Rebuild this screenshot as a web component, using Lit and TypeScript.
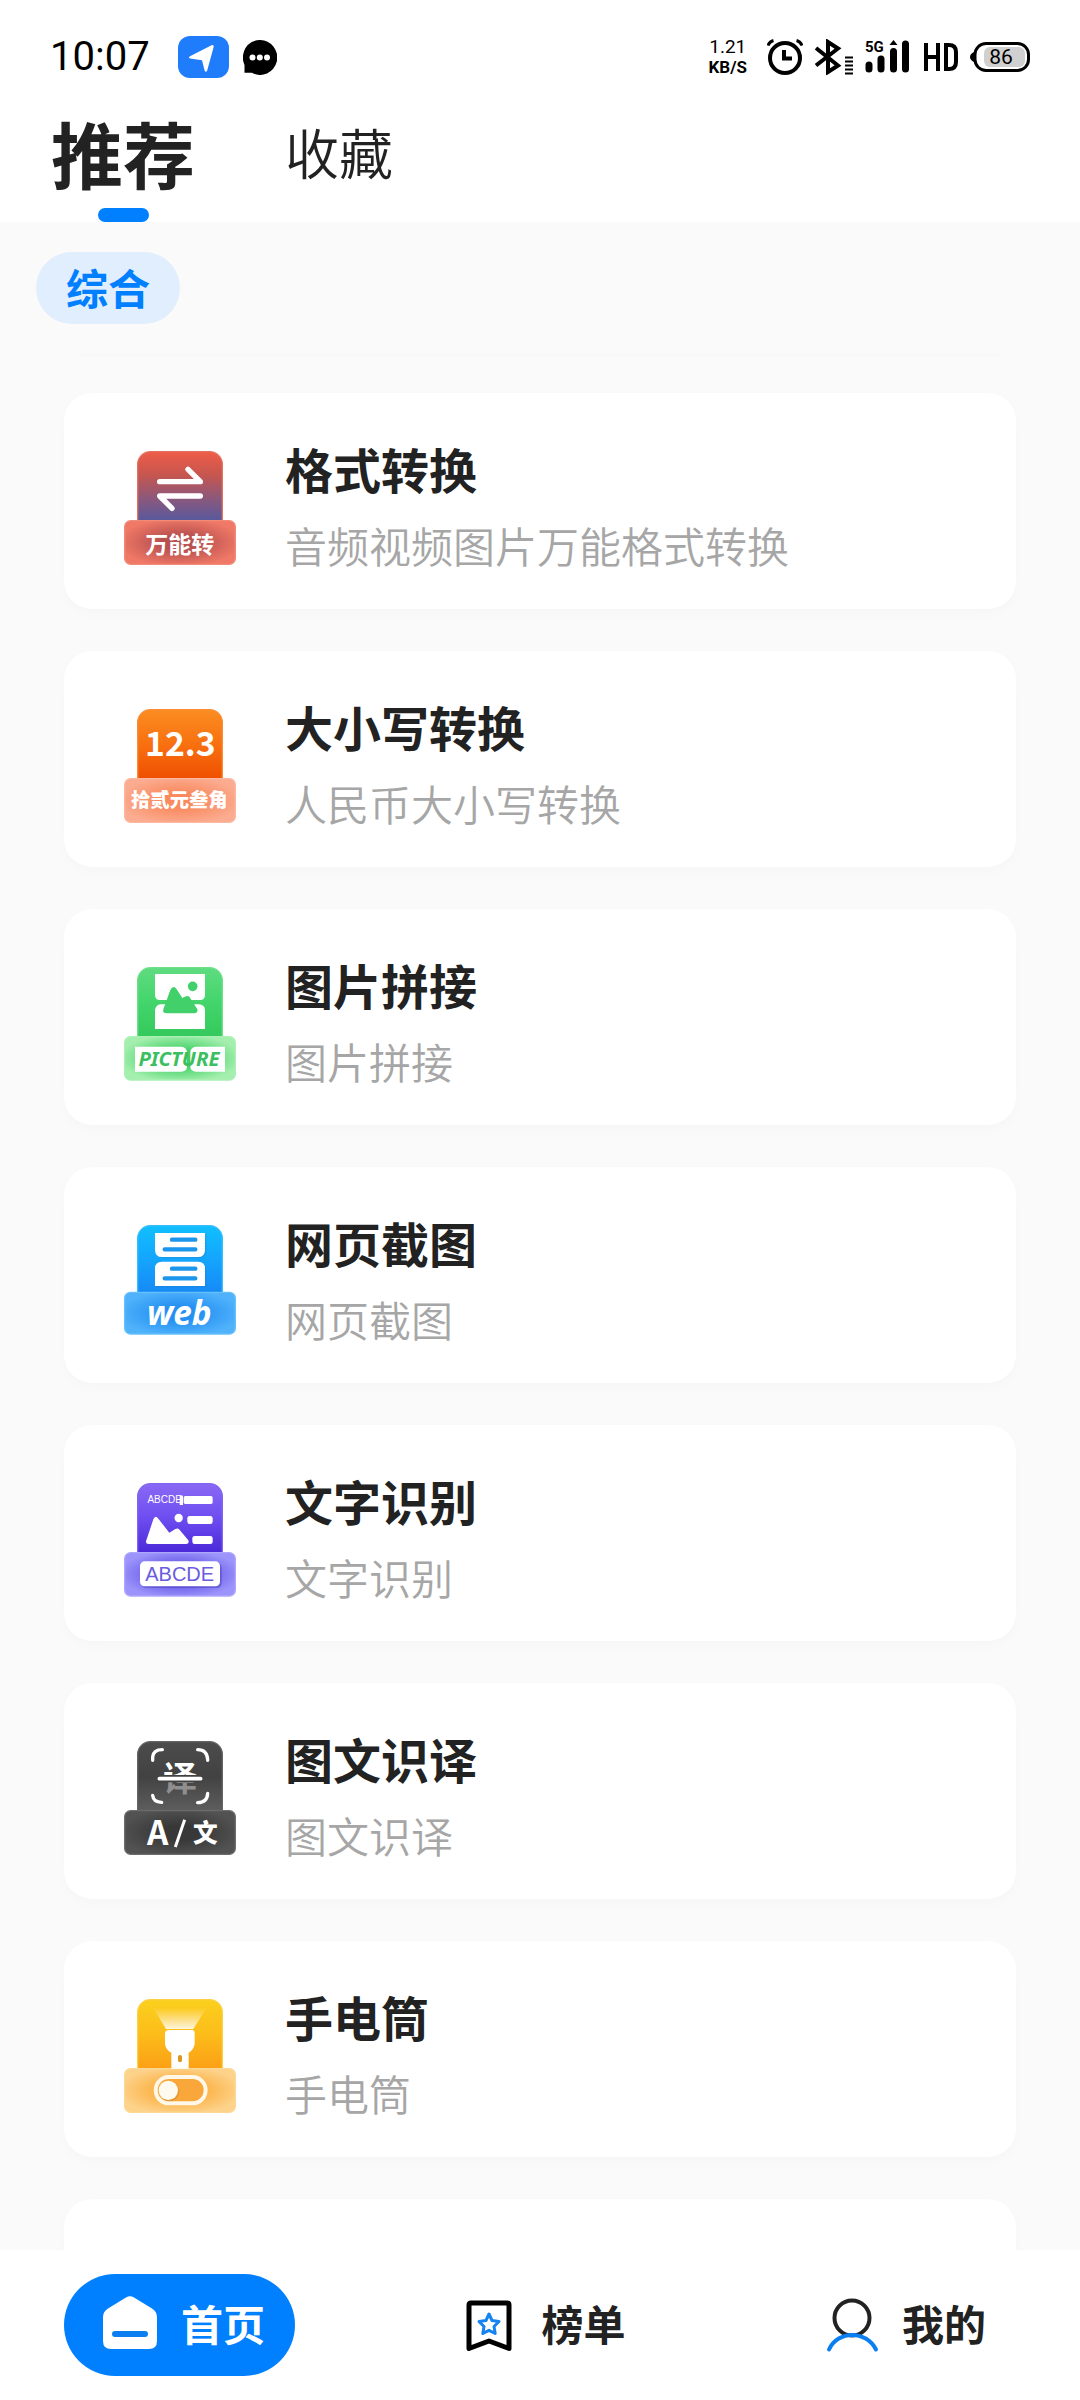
import { LitElement, html, svg, css, nothing, type SVGTemplateResult } from "lit";
import { customElement, property, state } from "lit/decorators.js";

interface Tool {
  id: string;
  title: string;
  note: string;
}

interface Glyph {
  top: number;
  art: SVGTemplateResult;
}

const TOOLS: Tool[] = [
  { id: "convert", title: "格式转换", note: "音频视频图片万能格式转换" },
  { id: "capital", title: "大小写转换", note: "人民币大小写转换" },
  { id: "stitch", title: "图片拼接", note: "图片拼接" },
  { id: "web", title: "网页截图", note: "网页截图" },
  { id: "ocr", title: "文字识别", note: "文字识别" },
  { id: "translate", title: "图文识译", note: "图文识译" },
  { id: "torch", title: "手电筒", note: "手电筒" },
];

/* Rounded plate behind every badge: upright card plus the label strip below it. */
const plate = (id: string, top: number, seam: number, bottom: number, edge: string, rim: string) => svg`
  <path d="M83 ${seam + 4}V${top + 40}a38 38 0 0 1 38-38h178a38 38 0 0 1 38 38V${seam + 4}z"
    fill="url(#${id}-body)" stroke=${edge} stroke-width="4"/>
  <rect x="44" y=${seam + 2} width="332" height=${bottom - seam - 4} rx="18"
    fill="url(#${id}-strip)" stroke=${rim} stroke-width="4"/>`;

const down = (id: string, ...stops: string[]) => svg`
  <linearGradient id="${id}-body" x1="0" y1="0" x2="0" y2="1">
    ${stops.map((c, i) => svg`<stop offset=${i / (stops.length - 1)} stop-color=${c}/>`)}
  </linearGradient>`;

const glow = (id: string, inner: string, outer: string) => svg`
  <radialGradient id="${id}-strip" cx="0.5" cy="0.5" r="0.55">
    <stop offset="0.3" stop-color=${inner}/><stop offset="1" stop-color=${outer}/>
  </radialGradient>`;

const GLYPHS: Record<string, Glyph> = {
  convert: {
    top: 63,
    art: svg`
      <defs>${down("cv", "#ef5c48", "#c6564f", "#8c587b", "#56599f")}${glow("cv", "#b85050", "#ef7866")}</defs>
      ${plate("cv", 63, 270, 405, "#e4705f", "#f28a78")}
      <g fill="none" stroke="#fff" stroke-width="16" stroke-linecap="round" stroke-linejoin="round">
        <path d="M149 155H271L234 118"/><path d="M271 198H149L186 235"/>
      </g>
      <text class="cjk" x="209" y="370" font-size="69" font-weight="700">万能转</text>`,
  },
  capital: {
    top: 57,
    art: svg`
      <defs>${down("cp", "#fb8d22", "#f87010", "#ee4f00")}${glow("cp", "#f98a5e", "#fbab90")}</defs>
      ${plate("cp", 57, 264, 399, "#fb8c34", "#fcb79e")}
      <text class="cjk" x="211" y="198" font-size="101" font-weight="700">12.3</text>
      <text class="cjk" x="208" y="350" font-size="58" font-weight="900">拾贰元叁角</text>`,
  },
  stitch: {
    top: 51,
    art: svg`
      <defs>${down("st", "#5fdc80", "#43d56b", "#35c95d")}${glow("st", "#3fcf63", "#a4efae")}</defs>
      ${plate("st", 51, 258, 392, "#6fe08a", "#a9f0b2")}
      <path fill="#fff" d="M135 72H285V136Q285 150 270 150H150Q135 150 135 136zM135 237V180Q137 163 155 163H266Q285 165 285 180V237z"/>
      <path fill="#41d069" d="M170 190Q156 189 160 178L181 120Q190 103 200 118L217 144 228 139Q238 135 242 146L262 178Q265 188 254 190z"/>
      <circle cx="248" cy="109" r="14.500" fill="#41d069"/>
      <path fill="#fff" d="M75 290H214Q230 292 231 306V350Q230 364 214 365H75zM345 290H258Q242 292 241 306V350Q242 364 258 365H345z"/>
      <text class="latin green" x="207" y="349" font-size="61" font-weight="700" font-style="italic">PICTURE</text>`,
  },
  web: {
    top: 60,
    art: svg`
      <defs>${down("wb", "#10bffe", "#14a5fd", "#1689f6")}${glow("wb", "#2590f2", "#4fb2fb")}</defs>
      ${plate("wb", 60, 260, 389, "#38bdfd", "#66c0fc")}
      <path fill="#1a7fd0" opacity=".35" d="M139 88H289V138Q289 160 268 160H160Q139 160 139 138zM139 247V196Q139 175 160 175H268Q289 175 289 196V247z"/>
      <path fill="#fff" d="M135 84H285V134Q285 156 264 156H156Q135 156 135 134zM135 243V190Q135 170 156 170H264Q285 170 285 190V243z"/>
      <g stroke="#1c95ec" stroke-width="13" stroke-linecap="round">
        <path d="M186 104H256M164 133H256M186 191H256M164 220H256"/>
      </g>
      <text class="latin" x="208" y="360" font-size="100" font-weight="700" font-style="italic">web</text>`,
  },
  ocr: {
    top: 54,
    art: svg`
      <defs>${down("oc", "#8a69f5", "#6d4df0", "#4a28d8")}${glow("oc", "#5f50e4", "#9c94fb")}</defs>
      ${plate("oc", 54, 261, 395, "#7f66f2", "#ada6fc")}
      <text class="sans" x="164" y="115" font-size="30">ABCDE</text>
      <path fill="#fff" d="M209 92h10v28h-10z"/>
      <rect x="221" y="93" width="87" height="24" rx="5" fill="#fff"/>
      <rect x="232" y="153" width="76" height="24" rx="7" fill="#fff"/>
      <rect x="247" y="213" width="61" height="24" rx="7" fill="#fff"/>
      <circle cx="206" cy="159" r="12.500" fill="#fff"/>
      <path fill="#fff" d="M116 237Q105 237 109 226L130 163Q136 149 145 161L178 203 196 192Q205 187 211 197L235 226Q239 237 228 237z"/>
      <rect x="95" y="294" width="240" height="75" rx="14" fill="#3522a8" opacity=".35"/>
      <rect x="90" y="289" width="240" height="75" rx="14" fill="#fff"/>
      <text class="sans violet" x="209" y="349" font-size="60">ABCDE</text>`,
  },
  translate: {
    top: 48,
    art: svg`
      <defs>
        ${down("tr", "#4c4c4c", "#424242", "#5e5e5e")}${glow("tr", "#383838", "#525252")}
        <linearGradient id="tr-ink" gradientUnits="userSpaceOnUse" x1="0" y1="100" x2="0" y2="212">
          <stop offset="0.5" stop-color="#fff"/><stop offset="0.5" stop-color="#8f8f8f"/>
        </linearGradient>
      </defs>
      ${plate("tr", 48, 255, 390, "#646464", "#6c6c6c")}
      <path fill="none" stroke="#fff" stroke-width="10" stroke-linecap="round"
        d="M128 106V96Q130 74 157 74M263 74Q291 74 293 104V106M293 205Q292 232 263 233M128 211Q130 231 155 232"/>
      <text class="cjk split" x="210" y="197" font-size="102" font-weight="700">译</text>
      <path d="M140 161H280" stroke="#424242" stroke-width="22"/>
      <path d="M148 161H272" stroke="#fff" stroke-width="11" stroke-linecap="round"/>
      <text class="cjk" x="143" y="360" font-size="100" font-weight="700">A</text>
      <path d="M196 366L224 284" stroke="#fff" stroke-width="9"/>
      <text class="cjk" x="286" y="351" font-size="74" font-weight="900">文</text>`,
  },
  torch: {
    top: 57,
    art: svg`
      <defs>
        ${down("to", "#fbd01e", "#fcbc1a", "#fb9f15")}${glow("to", "#fbae3c", "#fdd28a")}
        <linearGradient id="to-ray" x1="0" y1="0" x2="0" y2="1">
          <stop offset="0" stop-color="#fff" stop-opacity="0"/><stop offset="1" stop-color="#fff" stop-opacity=".85"/>
        </linearGradient>
      </defs>
      ${plate("to", 57, 264, 399, "#fcd040", "#fdd894")}
      <path d="M130 84H289L250 147H168z" fill="url(#to-ray)"/>
      <path fill="#fff" d="M174 150H246Q254 151 254 159V192Q250 212 236 218V266H184V218Q168 211 165 192V159Q166 151 174 150z"/>
      <rect x="204" y="225" width="12" height="22" rx="6" fill="#e0951e"/>
      <rect x="137" y="291" width="150" height="79" rx="39.500" fill="#f9a73a" stroke="#fff8e8" stroke-width="12"/>
      <circle cx="178" cy="334" r="30" fill="#b97716" opacity=".35"/>
      <circle cx="175" cy="331" r="29" fill="#fffaf0"/>`,
  },
};

@customElement("tool-badge")
class ToolBadge extends LitElement {
  @property() name = "";

  static styles = css`
    :host { display: block; flex: none; padding-top: 2px; }
    svg { display: block; width: 112px; height: 114px; overflow: visible; }
    text { fill: #fff; text-anchor: middle; }
    .cjk { font-family: "Noto Sans CJK SC", sans-serif; }
    .latin { font-family: "Noto Sans", sans-serif; }
    .sans { font-family: "Liberation Sans", sans-serif; }
    .green { fill: #3bbf60; }
    .violet { fill: #6a5be0; }
    .split { fill: url(#tr-ink); }
  `;

  render() {
    const glyph = GLYPHS[this.name];
    return glyph
      ? html`<svg viewBox="42 ${glyph.top} 336 342" aria-hidden="true">${glyph.art}</svg>`
      : nothing;
  }
}

@customElement("tool-card")
class ToolCard extends LitElement {
  @property({ attribute: false }) tool?: Tool;

  static styles = css`
    :host { display: block; flex: none; }
    .card {
      display: flex;
      align-items: center;
      gap: 49px;
      box-sizing: border-box;
      min-height: 216px;
      padding: 36px 60px 24px;
      border-radius: 28px;
      background: #fff;
      box-shadow: 0 4px 12px rgba(0, 0, 0, 0.02);
      color: inherit;
      text-decoration: none;
    }
    .words { min-width: 0; }
    .title { margin: 0; font-size: 48px; line-height: 78px; font-weight: 700; color: #222; }
    .note { margin: 0; padding-bottom: 2px; font-size: 42px; line-height: 76px; font-weight: 350; color: #a6a6a6; }
  `;

  render() {
    const t = this.tool;
    if (!t) return html`<div class="card"></div>`;
    return html`<a class="card" href="#${t.id}">
      <tool-badge name=${t.id}></tool-badge>
      <div class="words">
        <h2 class="title">${t.title}</h2>
        <p class="note">${t.note}</p>
      </div>
    </a>`;
  }
}

@customElement("status-bar")
class StatusBar extends LitElement {
  static styles = css`
    :host {
      display: flex;
      align-items: center;
      justify-content: space-between;
      height: 110px;
      padding: 4px 50px 0 50px;
      box-sizing: border-box;
      color: #000;
      font-family: Roboto, sans-serif;
    }
    .side { display: flex; align-items: center; }
    .clock { font-size: 40px; line-height: 48px; margin-right: 28px; }
    .app { margin-right: 14px; }
    .right { gap: 12px; }
    .rate { display: flex; flex-direction: column; align-items: center; margin-right: 8px; font-size: 19px; line-height: 20px; }
    .unit { font-size: 17px; font-weight: 700; }
    svg { display: block; flex: none; }
    .level { font: 21px Roboto, sans-serif; }
    .net { font: 700 15px Roboto, sans-serif; }
  `;

  render() {
    return html`
      <div class="side">
        <span class="clock">10:07</span>
        <svg class="app" width="51" height="42" viewBox="0 0 51 42" aria-hidden="true">
          <rect width="51" height="42" rx="12" fill="#1f7cfb"/>
          <path fill="#fff" d="M33.500 9.300Q36.300 8.300 35.600 11.200L29.200 34.500Q27.800 37 26.600 34.500L24 24.200 12 22.600Q9.800 21.600 12 20.200z"/>
        </svg>
        <svg width="34" height="35" viewBox="0 0 34 35" aria-hidden="true">
          <path d="M17 0A17 17.500 0 1 1 9 32.800H1.500V25A17 17.500 0 0 1 17 0z"/>
          <g fill="#fff"><circle cx="9.500" cy="17.500" r="3"/><circle cx="16.800" cy="17.500" r="3"/><circle cx="24" cy="17.500" r="3"/></g>
        </svg>
      </div>
      <div class="side right">
        <span class="rate"><span>1.21</span><span class="unit">KB/S</span></span>
        <svg width="36" height="36" viewBox="0 0 36 36" aria-hidden="true" fill="none" stroke="#000">
          <circle cx="18" cy="19" r="15" stroke-width="4"/>
          <path d="M17 11v8.500h8" stroke-width="4"/>
          <path d="M1 6.500Q2.500 2.500 6.500 1.500M35 6.500Q33.500 2.500 29.500 1.500" stroke-width="3"/>
        </svg>
        <svg width="38" height="36" viewBox="0 0 38 36" aria-hidden="true" fill="none" stroke="#000">
          <path d="M1 9L23 26.500 13 33V3L23 9.500 1 26.500" stroke-width="4"/>
          <path d="M30 18.500h8M30 22.500h8M30 26.500h8M30 30.500h8M30 34.500h8" stroke-width="2"/>
        </svg>
        <svg width="45" height="36" viewBox="0 0 45 36" role="img" aria-label="signal">
          <text class="net" x="0" y="13">5G</text>
          <g stroke="#000" stroke-width="7" stroke-linecap="round">
            <path d="M4 26v4M16 20v10M28.500 12.500v17.500M40.500 5v25"/>
          </g>
          <path d="M28.500 1l4 5h-8z"/>
        </svg>
        <svg width="36" height="36" viewBox="-1 0 36 36" role="img" aria-label="HD" fill="none" stroke="#000" stroke-width="4">
          <path d="M3 4v28M15 4v28M3 18h12M23 6v24h3q7 0 7-7v-10q0-7-7-7z"/>
        </svg>
        <svg width="60" height="30" viewBox="0 0 60 30" role="img" aria-label="86%">
          <path d="M4 10Q0 12 0 15t4 5z"/>
          <rect x="5" y="1.500" width="53.500" height="27" rx="11" fill="#fff" stroke="#000" stroke-width="3"/>
          <rect x="14" y="5" width="41" height="20" rx="6" fill="#d0d0d0"/>
          <text class="level" x="31" y="22" text-anchor="middle">86</text>
        </svg>
      </div>`;
  }
}

@customElement("app-root")
class AppRoot extends LitElement {
  @state() private tab = 0;
  @state() private page = 0;

  static styles = css`
    :host {
      display: flex;
      flex-direction: column;
      height: 100vh;
      background: #fafafa;
      color: #222;
      font-family: "Noto Sans CJK SC", sans-serif;
    }
    button { border: 0; padding: 0; background: none; color: inherit; font-family: inherit; cursor: pointer; }
    header { flex: none; background: #fff; }
    .tabs { display: flex; gap: 90px; padding: 0 51px; }
    .tab {
      display: flex;
      flex-direction: column;
      align-items: center;
      gap: 14px;
      font-size: 54px;
      line-height: 84px;
      font-weight: 350;
    }
    .tab.active { font-size: 72px; font-weight: 700; }
    .tab.active::after { content: ""; width: 51px; height: 14px; border-radius: 7px; background: #0080ff; }
    main { flex: 1; min-height: 0; overflow: auto; scrollbar-width: none; }
    .filters { display: flex; padding: 30px 36px; }
    .chip {
      height: 72px;
      padding: 0 30px 2px;
      border-radius: 36px;
      background: #e0eefd;
      color: #0080ff;
      font-size: 42px;
      line-height: 68px;
      font-weight: 700;
    }
    .rule { height: 0; margin: 0 80px; border: 0; border-top: 2px solid #f7f7f7; }
    .list { display: flex; flex-direction: column; gap: 42px; margin: 0; padding: 37px 64px 42px; list-style: none; }
    nav { flex: none; display: flex; justify-content: space-between; padding: 24px 64px; background: #fff; }
    .item {
      display: flex;
      align-items: center;
      gap: 15px;
      height: 102px;
      padding: 0 30px;
      border-radius: 51px;
      font-size: 42px;
      line-height: 72px;
      font-weight: 700;
    }
    .item.active { background: #0080ff; color: #fff; }
    .item svg { display: block; width: 72px; height: 72px; }
    .item span { padding-bottom: 4px; }
  `;

  private icons = [
    svg`<path fill="#fff" d="M32 8.500Q36 6 40 8.500L58 19.500Q63 22.500 63 28V52Q63 60 55 60H17Q9 60 9 52V28Q9 22.500 14 19.500z"/>
      <path d="M21 45H51" stroke="#0b7ff2" stroke-width="6" stroke-linecap="round"/>`,
    svg`<path fill="none" stroke="#000" stroke-width="5" stroke-linejoin="round"
        d="M17 14H53Q55 14 55 16V59.500L35 52 15 59.500V16Q15 14 17 14z"/>
      <path fill="none" stroke="#1583f0" stroke-width="3" stroke-linejoin="round"
        d="M35 25l3 6.500 7 1-5 5 1.200 7-6.200-3.200-6.200 3.200 1.200-7-5-5 7-1z"/>`,
    svg`<circle cx="37" cy="29" r="17.500" fill="none" stroke="#222" stroke-width="4"/>
      <path d="M14 60.500C23 41 51 41 61 60.500" fill="none" stroke="#0b7ff2" stroke-width="4" stroke-linecap="round"/>`,
  ];

  render() {
    return html`
      <header>
        <status-bar></status-bar>
        <div class="tabs" role="tablist">
          ${["推荐", "收藏"].map(
            (label, i) => html`<button class="tab ${i === this.tab ? "active" : ""}" role="tab"
              aria-selected=${i === this.tab ? "true" : "false"} @click=${() => (this.tab = i)}>${label}</button>`,
          )}
        </div>
      </header>
      <main>
        <div class="filters"><button class="chip">综合</button></div>
        <hr class="rule" />
        <ul class="list">
          ${TOOLS.map((t) => html`<li><tool-card .tool=${t}></tool-card></li>`)}
          <li><tool-card></tool-card></li>
        </ul>
      </main>
      <nav>
        ${["首页", "榜单", "我的"].map(
          (label, i) => html`<button class="item ${i === this.page ? "active" : ""}" @click=${() => (this.page = i)}>
            <svg viewBox="0 0 72 72" aria-hidden="true">${this.icons[i]}</svg><span>${label}</span>
          </button>`,
        )}
      </nav>`;
  }
}
